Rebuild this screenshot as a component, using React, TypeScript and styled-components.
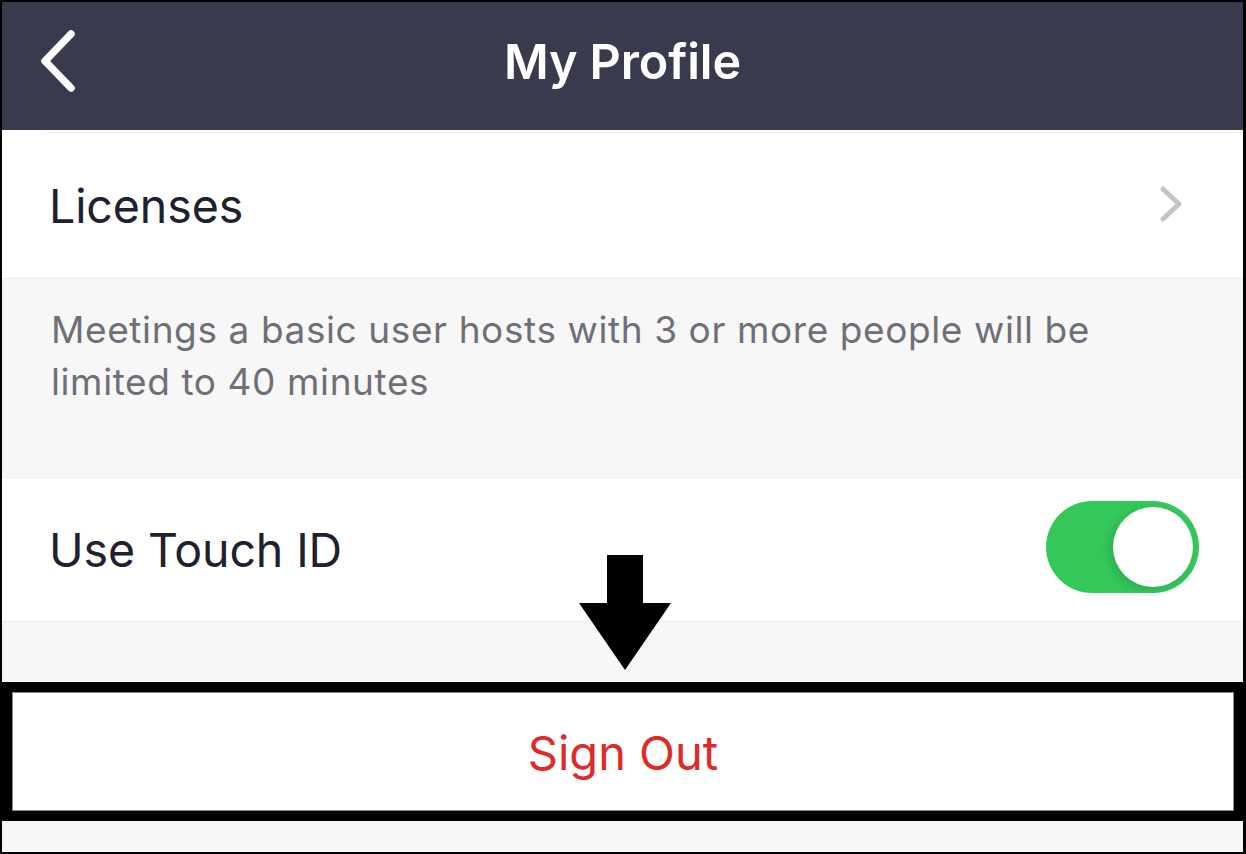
import { createGlobalStyle, styled } from 'styled-components'

const GlobalStyle = createGlobalStyle`
  html, body {
    margin: 0;
    padding: 0;
    background: #ffffff;
  }
  body {
    font-family: Inter, 'Noto Sans', 'Liberation Sans', sans-serif;
  }
`

const Frame = styled.div`
  position: relative;
  width: 1246px;
  height: 854px;
  box-sizing: border-box;
  border: 2px solid #000;
  border-right-width: 3px;
  background: #f7f7f7;
  display: flex;
  flex-direction: column;
  overflow: hidden;
`

const Header = styled.header`
  height: 128px;
  flex-shrink: 0;
  background: #3a3a4e;
  display: flex;
  align-items: center;
  justify-content: center;
  position: relative;
`

const BackButton = styled.button`
  position: absolute;
  left: 32px;
  top: 23px;
  width: 48px;
  height: 72px;
  padding: 0;
  border: 0;
  background: none;
  display: flex;
  align-items: center;
  justify-content: center;
`

const Title = styled.h1`
  margin: 0;
  color: #fff;
  font-size: 48.5px;
  font-weight: 600;
  letter-spacing: -0.1px;
  margin-top: -10px;
`

type RowProps = { $height: number; $topInset?: boolean }
const Row = styled.div<RowProps>`
  height: ${(p) => p.$height}px;
  flex-shrink: 0;
  background: #fff;
  display: flex;
  align-items: center;
  justify-content: space-between;
  padding: 0 58px 0 47px;
  box-sizing: border-box;
  border-bottom: 1px solid #ececec;
  position: relative;
  ${(p) =>
    p.$topInset &&
    `
    &::before {
      content: '';
      position: absolute;
      left: 45px;
      right: 0;
      top: 2px;
      height: 1px;
      background: #efefef;
    }
  `}
`

const RowLabel = styled.span<{ $shift?: number }>`
  color: #20202e;
  font-size: 46.5px;
  font-weight: 400;
  letter-spacing: -0.1px;
  margin-top: ${(p) => p.$shift ?? 0}px;
`

const Note = styled.div`
  height: 199px;
  flex-shrink: 0;
  box-sizing: border-box;
  padding: 25px 80px 0 49px;
  background: #f7f7f7;
  border-bottom: 1px solid #ececec;
  color: #6f6f78;
  font-size: 37px;
  line-height: 51.6px;
  letter-spacing: 0.6px;
`

const Toggle = styled.div`
  width: 153px;
  height: 92px;
  border-radius: 46px;
  background: #34c759;
  position: relative;
  margin-right: -14px;
  margin-bottom: 6px;
  &::after {
    content: '';
    position: absolute;
    right: 6px;
    top: 6px;
    width: 80px;
    height: 80px;
    border-radius: 50%;
    background: #fff;
    box-shadow: -4px 3px 10px rgba(0, 0, 0, 0.12);
  }
`

const Gap = styled.div<{ $height: number }>`
  height: ${(p) => p.$height}px;
  flex-shrink: 0;
`

const SignOutBox = styled.div`
  height: 139px;
  flex-shrink: 0;
  box-sizing: border-box;
  border: 10px solid #000;
  margin-right: -1px;
  background: #fff;
  display: flex;
  align-items: center;
  justify-content: center;
  box-shadow: inset 0 0 0 1px #888;
`

const SignOutText = styled.span`
  color: #e02a2a;
  font-size: 47px;
  font-weight: 400;
  margin-top: 2px;
`

const Arrow = styled.svg`
  position: absolute;
  left: 575px;
  top: 551px;
`

function App() {
  return (
    <>
      <GlobalStyle />
      <Frame>
        <Header>
          <BackButton aria-label="Back">
            <svg width="40" height="66" viewBox="0 0 40 66">
              <path
                d="M33 6 L7 33 L33 60"
                fill="none"
                stroke="#fff"
                strokeWidth="7.5"
                strokeLinecap="round"
                strokeLinejoin="round"
              />
            </svg>
          </BackButton>
          <Title>My Profile</Title>
        </Header>
        <Row $height={149} $topInset>
          <RowLabel $shift={4}>Licenses</RowLabel>
          <svg width="26" height="38" viewBox="0 0 26 38">
            <path
              d="M4 4 L20 19 L4 34"
              fill="none"
              stroke="#c4c4c8"
              strokeWidth="5"
              strokeLinecap="round"
              strokeLinejoin="round"
            />
          </svg>
        </Row>
        <Note>
          Meetings a basic user hosts with 3 or more people will be limited to 40 minutes
        </Note>
        <Row $height={144}>
          <RowLabel>Use Touch ID</RowLabel>
          <Toggle />
        </Row>
        <Gap $height={60} />
        <SignOutBox>
          <SignOutText>Sign Out</SignOutText>
        </SignOutBox>
        <Arrow width="96" height="120" viewBox="0 0 96 120">
          <path d="M30 2 H66 V50 H94 L48 117 L2 50 H30 Z" fill="#000" />
        </Arrow>
      </Frame>
    </>
  )
}

export default App
